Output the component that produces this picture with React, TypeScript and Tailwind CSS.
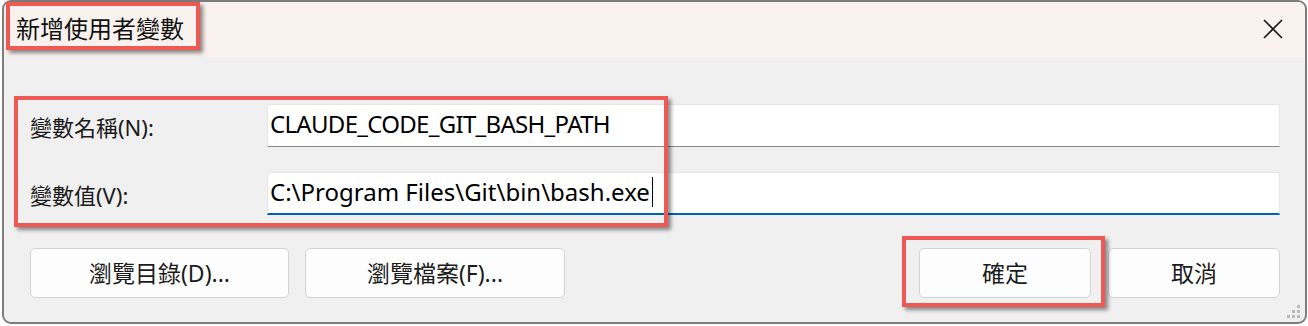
import React from 'react';

const font = { fontFamily: '"Noto Sans", "Noto Sans CJK TC", sans-serif' };

// 標註用紅框（覆蓋在畫面上）
function RedBox({ className }: { className: string }) {
  return (
    <div
      className={`absolute border-[4px] border-[#ee5a53] shadow-[3px_3px_4px_rgba(0,0,0,0.45)] pointer-events-none ${className}`}
    />
  );
}

function Btn({ label, w }: { label: string; w: string }) {
  return (
    <button
      className={`${w} h-[50px] bg-[#fdfdfd] border border-[#d3d3d3] rounded-[5px] text-[23px] text-[#1b1b1b] flex items-center justify-center`}
    >
      {label}
    </button>
  );
}

export default function App() {
  return (
    <div className="w-[1308px] h-[326px] bg-white overflow-hidden" style={font}>
      <div className="relative ml-[2px] w-[1305px] h-[324px] border-2 border-[#7d7d7d] rounded-[9px] overflow-hidden bg-[#f0f0f0]">
        {/* 標題列 */}
        <div className="h-[55px] bg-[#f9f1ed] flex items-center justify-between">
          <span className="pl-[12px] text-[24px] text-[#111] leading-none -mt-[2px]">新增使用者變數</span>
          <div className="w-[64px] h-full flex items-center justify-center -mt-[2px]">
            <svg width="20" height="20" viewBox="0 0 20 20">
              <path d="M1 1 L19 19 M19 1 L1 19" stroke="#1a1a1a" strokeWidth="1.6" fill="none" />
            </svg>
          </div>
        </div>

        {/* 欄位 */}
        <div className="pt-[47px] pl-[26px] pr-[25px] flex flex-col">
          <div className="flex items-center h-[43px]">
            <span className="w-[237px] text-[22px] text-[#1b1b1b] pt-[4px]">變數名稱(N):</span>
            <div className="flex-1 h-[43px] bg-white border border-[#e6e6e6] border-b-[#8a8a8a] rounded-t-[3px] flex items-center pl-[2px] pb-[3px] text-[24px] tracking-[-0.7px] text-black">
              CLAUDE_CODE_GIT_BASH_PATH
            </div>
          </div>
          <div className="flex items-center h-[43px] mt-[25px]">
            <span className="w-[237px] text-[22px] text-[#1b1b1b] pt-[4px]">變數值(V):</span>
            <div className="flex-1 h-[43px] bg-white border border-[#e6e6e6] border-b-2 border-b-[#005fb8] rounded-t-[3px] flex items-center pl-[2px] pb-[3px] text-[24px] text-black">
              <span>C:\Program Files\Git\bin\bash.exe</span>
              <span className="inline-block w-[1px] h-[30px] bg-black ml-[2px]" />
            </div>
          </div>

          {/* 按鈕列 */}
          <div className="flex items-center justify-between mt-[33px]">
            <div className="flex gap-[16px]">
              <Btn label="瀏覽目錄(D)..." w="w-[259px]" />
              <Btn label="瀏覽檔案(F)..." w="w-[260px]" />
            </div>
            <div className="flex gap-[17px]">
              <Btn label="確定" w="w-[172px]" />
              <Btn label="取消" w="w-[172px]" />
            </div>
          </div>
        </div>

        {/* 右下角縮放把手 */}
        <svg className="absolute right-[4px] bottom-[3px]" width="14" height="14" viewBox="0 0 14 14">
          <g fill="#b9b9b9">
            <rect x="10" y="0" width="3" height="3" />
            <rect x="5" y="5" width="3" height="3" />
            <rect x="10" y="5" width="3" height="3" />
            <rect x="0" y="10" width="3" height="3" />
            <rect x="5" y="10" width="3" height="3" />
            <rect x="10" y="10" width="3" height="3" />
          </g>
        </svg>
      </div>

      {/* 標註紅框 */}
      <RedBox className="left-[6px] top-[2px] w-[194px] h-[48px]" />
      <RedBox className="left-[14px] top-[96px] w-[654px] h-[131px]" />
      <RedBox className="left-[902px] top-[236px] w-[203px] h-[71px]" />
    </div>
  );
}
